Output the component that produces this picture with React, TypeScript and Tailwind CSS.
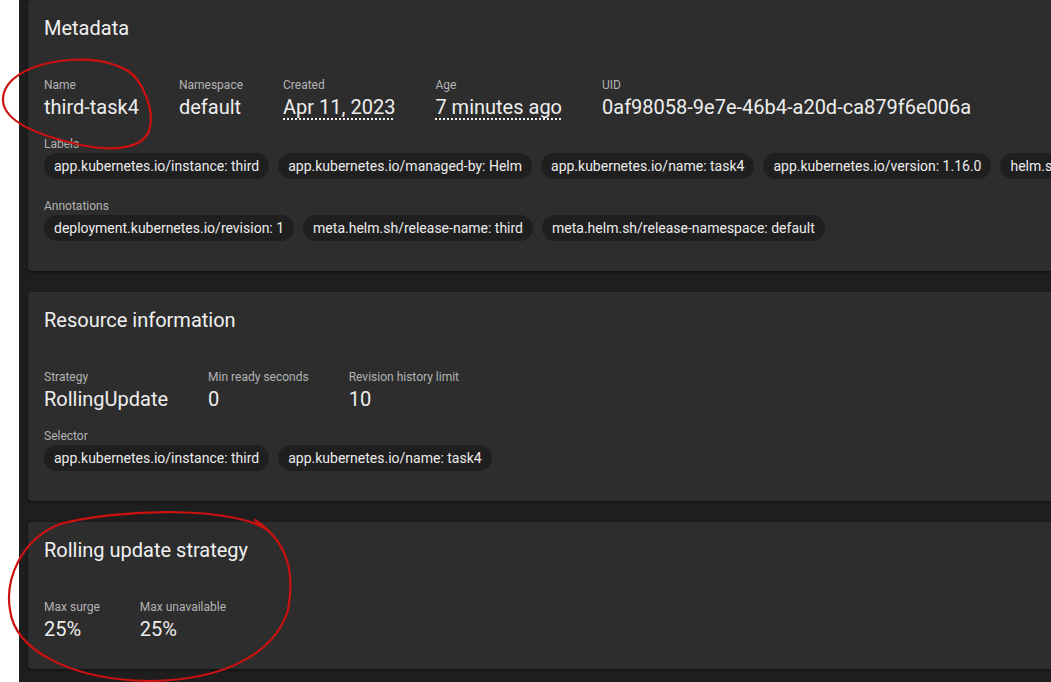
import React from 'react';

type Field = { label: string; value: string; dotted?: boolean };

const font = { fontFamily: 'Roboto, "Open Sans", sans-serif' };

function Chip({ text }: { text: string }) {
  return (
    <span className="inline-flex h-[26px] items-center whitespace-nowrap rounded-full bg-[#1f1f1f] px-[10px] text-[14px] text-[#ececec]">
      {text}
    </span>
  );
}

function Fields({ items }: { items: Field[] }) {
  return (
    <div className="flex gap-x-10">
      {items.map((f) => (
        <div key={f.label} className="flex flex-col">
          <span className="text-[12px] leading-4 text-[#b3b3b3]">{f.label}</span>
          <span
            className={
              f.dotted
                ? 'text-[20px] leading-7 text-[#ededed] underline decoration-dotted decoration-[#ededed] underline-offset-4'
                : 'text-[20px] leading-7 text-[#ededed]'
            }
          >
            {f.value}
          </span>
        </div>
      ))}
    </div>
  );
}

function ChipGroup({ label, chips }: { label: string; chips: string[] }) {
  return (
    <div className="flex flex-col">
      <span className="text-[12px] leading-4 text-[#b3b3b3]">{label}</span>
      <div className="mt-px flex flex-nowrap gap-[9px]">
        {chips.map((c) => (
          <Chip key={c} text={c} />
        ))}
      </div>
    </div>
  );
}

function Card({ title, children, className }: { title: string; children: React.ReactNode; className?: string }) {
  return (
    <section
      className={
        'rounded bg-[#2d2d2d] px-4 pt-4 shadow-[0_1px_3px_rgba(0,0,0,0.55)] ' + (className ?? '')
      }
    >
      <h2 className="text-[20px] leading-6 text-[#f0f0f0]">{title}</h2>
      <div className="mt-[37px]">{children}</div>
    </section>
  );
}

export default function App() {
  return (
    <div className="relative flex h-[682px] w-[1051px] overflow-hidden bg-white" style={font}>
      <div className="w-[19px] shrink-0 bg-white" />
      <div className="flex w-[1300px] shrink-0 flex-col gap-[21px] bg-[#1e1e1e] pl-[9px]">
        <Card title="Metadata" className="pb-[30px]">
          <Fields
            items={[
              { label: 'Name', value: 'third-task4' },
              { label: 'Namespace', value: 'default' },
              { label: 'Created', value: 'Apr 11, 2023', dotted: true },
              { label: 'Age', value: '7 minutes ago', dotted: true },
              { label: 'UID', value: '0af98058-9e7e-46b4-a20d-ca879f6e006a' },
            ]}
          />
          <div className="mt-[15px]">
            <ChipGroup
              label="Labels"
              chips={[
                'app.kubernetes.io/instance: third',
                'app.kubernetes.io/managed-by: Helm',
                'app.kubernetes.io/name: task4',
                'app.kubernetes.io/version: 1.16.0',
                'helm.sh/chart: task4-0.1.0',
              ]}
            />
          </div>
          <div className="mt-[19px]">
            <ChipGroup
              label="Annotations"
              chips={[
                'deployment.kubernetes.io/revision: 1',
                'meta.helm.sh/release-name: third',
                'meta.helm.sh/release-namespace: default',
              ]}
            />
          </div>
        </Card>

        <Card title="Resource information" className="pb-[30px]">
          <Fields
            items={[
              { label: 'Strategy', value: 'RollingUpdate' },
              { label: 'Min ready seconds', value: '0' },
              { label: 'Revision history limit', value: '10' },
            ]}
          />
          <div className="mt-[15px]">
            <ChipGroup
              label="Selector"
              chips={['app.kubernetes.io/instance: third', 'app.kubernetes.io/name: task4']}
            />
          </div>
        </Card>

        <Card title="Rolling update strategy" className="pb-[26px]">
          <Fields
            items={[
              { label: 'Max surge', value: '25%' },
              { label: 'Max unavailable', value: '25%' },
            ]}
          />
        </Card>
      </div>

      {/* hand-drawn annotation marks */}
      <svg
        className="pointer-events-none absolute left-0 top-0"
        width="1051"
        height="682"
        viewBox="0 0 1051 682"
        fill="none"
      >
        <path
          d="M127 70 C142 80 156 110 149 131 C142 149 112 151 86 146 C52 139 5 126 3 101 C2 79 30 63 70 60 C100 58 120 64 135 76"
          stroke="#cc1111"
          strokeWidth="2.2"
          strokeLinecap="round"
        />
        <path
          d="M270 532 C240 506 120 508 60 524 C20 540 5 580 10 610 C15 650 70 680 150 681 C230 680 276 650 288 610 C295 572 288 542 255 520"
          stroke="#cc1111"
          strokeWidth="2.2"
          strokeLinecap="round"
        />
      </svg>
    </div>
  );
}
